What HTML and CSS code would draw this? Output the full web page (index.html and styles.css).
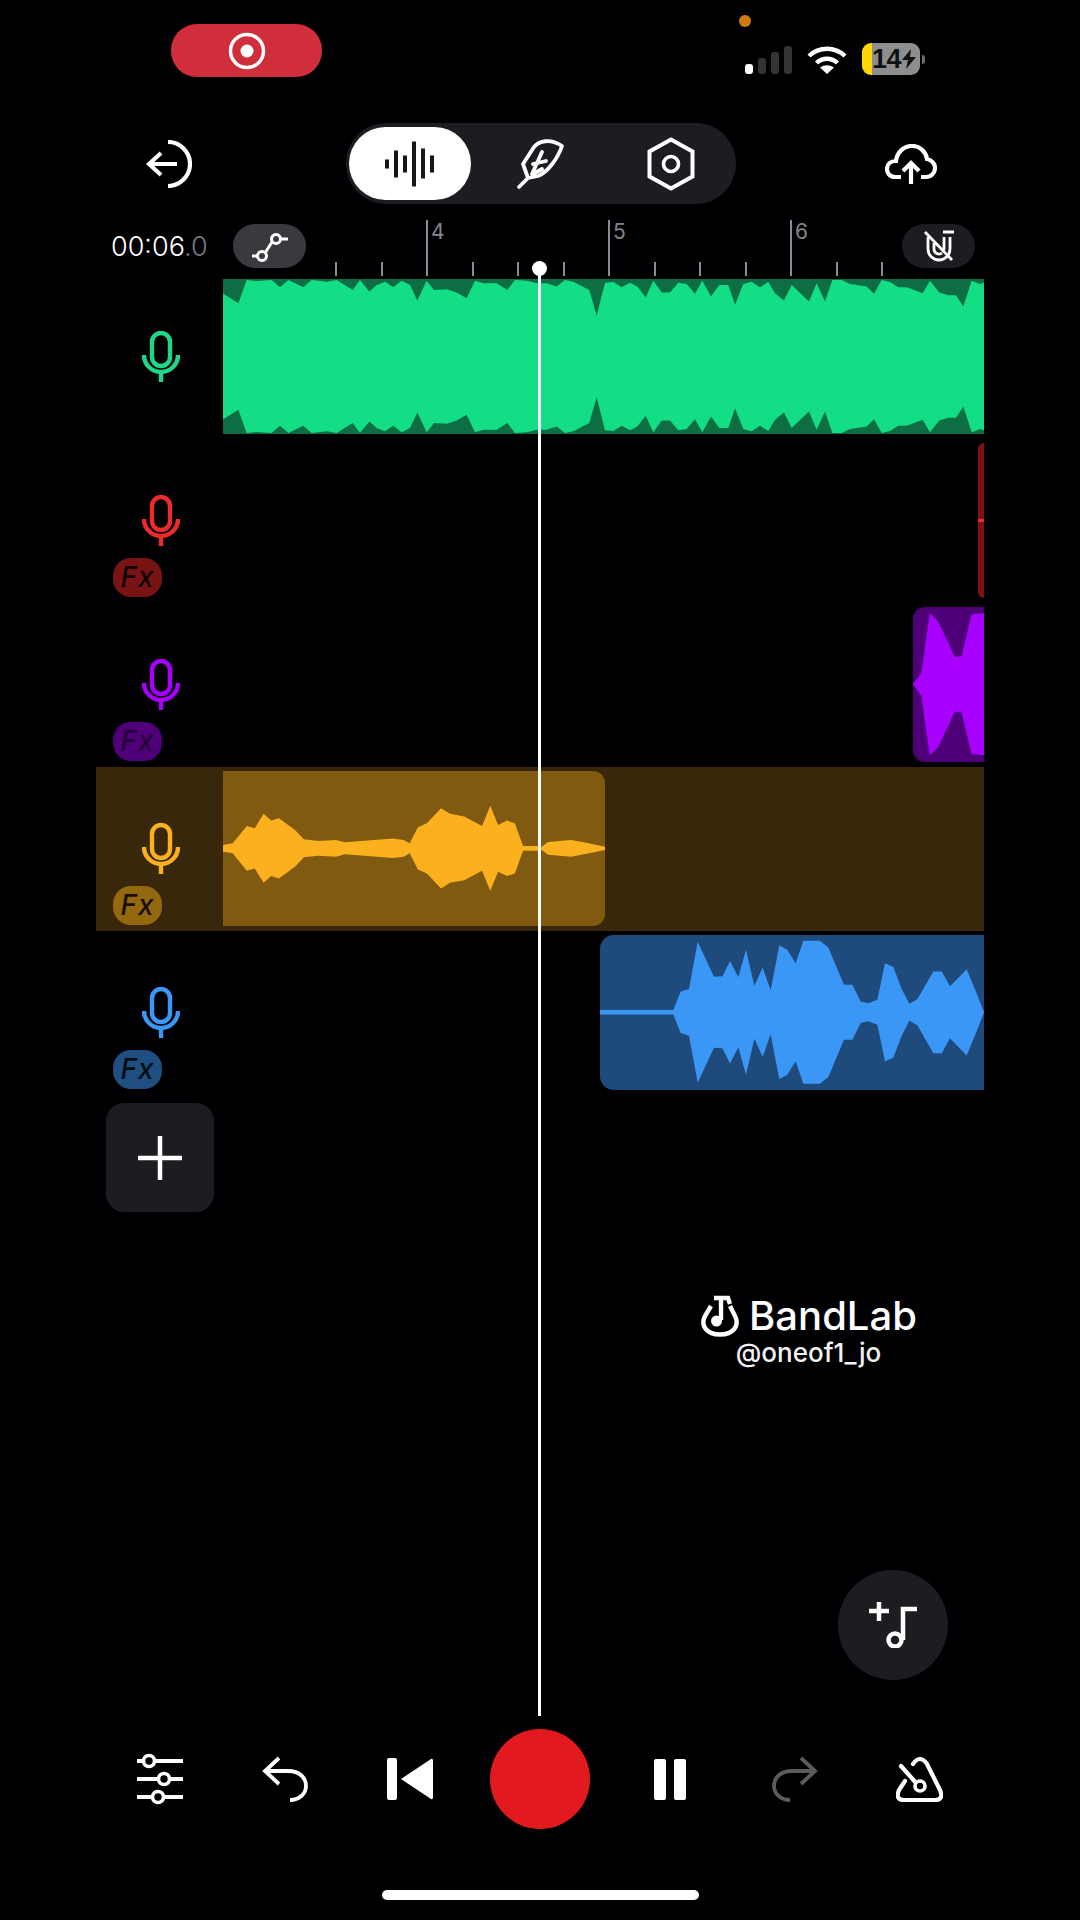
FILE: index.html
```html
<!DOCTYPE html>
<html lang="en">
<head>
<meta charset="UTF-8">
<title>BandLab Studio</title>
<meta name="viewport" content="width=device-width, initial-scale=1">
<link rel="stylesheet" href="styles.css">
</head>

<body>
<div class="screen">
  <div class="status-bar">
    <div class="rec-pill">
      <svg width="38" height="38" viewBox="0 0 38 38"><circle cx="19" cy="19" r="16.5" fill="none" stroke="#fff" stroke-width="3.5"/><circle cx="19" cy="19" r="6.5" fill="#fff"/></svg>
    </div>
    <div class="status-icons">
      <div class="signal">
        <span class="bar on b1"></span><span class="bar b2"></span><span class="bar b3"></span><span class="bar b4"></span>
      </div>
      <svg class="wifi" width="40" height="28" viewBox="0 0 40 28"><path d="M2 10A26 26 0 0 1 38 10M9.5 17A15 15 0 0 1 30.5 17" fill="none" stroke="#fff" stroke-width="4.5"/><path d="M20 28L13 21.5Q20 17 27 21.5Z" fill="#fff"/></svg>
      <div class="battery">
        <span class="battery-pct">14</span>
        <svg width="14" height="20" viewBox="0 0 14 20"><path d="M9 0L0 11H6L4 20L14 8H8Z" fill="#111"/></svg>
      </div>
      <span class="battery-nub"></span>
    </div>
    <span class="mic-dot"></span>
  </div>

  <div class="toolbar">
    <svg class="back-icon" width="46" height="48" viewBox="0 0 46 48"><path d="M15 13L3 24L15 35M3 24H31M22 2A22 22 0 0 1 22 46" fill="none" stroke="#fff" stroke-width="4.2"/></svg>
    <div class="segments">
      <div class="seg seg-active">
        <svg width="50" height="48" viewBox="0 0 50 48"><path d="M2 19.5V28.5M11 10.5V37.5M20 15.5V32.5M29 1.5V46.5M38 8.5V38.5M47 15.5V32.5" stroke="#17171a" stroke-width="4"/></svg>
      </div>
      <div class="seg seg-feather">
        <svg width="60" height="60" viewBox="20 12 60 60"><path d="M72 24C60 16 49 19 44 25L33 42L38 56L48 54C58 50 68 36 72 24ZM38 56L29 65M52 30L42 52M43 42L56 39M43 52L52 47" fill="none" stroke="#fff" stroke-width="3.8" stroke-linecap="round" stroke-linejoin="round"/></svg>
      </div>
      <div class="seg seg-settings">
        <svg width="48" height="54" viewBox="0 0 48 54"><path d="M24 2.5L45.5 14.5V39.5L24 51.5L2.5 39.5V14.5Z" fill="none" stroke="#fff" stroke-width="4"/><circle cx="24" cy="27" r="7.5" fill="none" stroke="#fff" stroke-width="3.6"/></svg>
      </div>
    </div>
    <svg class="cloud-icon" width="52" height="40" viewBox="0 0 52 40"><path d="M16 33H10C4 33 2 28 2 25C2 20 6 17 11 17C12 8 19 2 27 2C35 2 41 8 42 15C47 16 50 20 50 24C50 29 46 33 41 33H36M26 40V19M18 27L26 19L34 27" fill="none" stroke="#fff" stroke-width="4.2"/></svg>
  </div>

  <div class="ruler">
    <div class="time">00:06<span class="time-dim">.0</span></div>
    <div class="ruler-pill pill-grey">
      <svg width="38" height="32" viewBox="0 0 38 32"><path d="M30 9H37M1 26H7M21 12L14 23" fill="none" stroke="#fff" stroke-width="3"/><circle cx="25" cy="9" r="4.5" fill="none" stroke="#fff" stroke-width="3"/><circle cx="11" cy="26" r="4.5" fill="none" stroke="#fff" stroke-width="3"/></svg>
    </div>
    <div class="ticks">
      <span class="tick"></span>
      <span class="tick"></span>
      <span class="tick major"><b>4</b></span>
      <span class="tick"></span>
      <span class="tick"></span>
      <span class="tick"></span>
      <span class="tick major"><b>5</b></span>
      <span class="tick"></span>
      <span class="tick"></span>
      <span class="tick"></span>
      <span class="tick major"><b>6</b></span>
      <span class="tick"></span>
      <span class="tick"></span>
    </div>
    <div class="ruler-pill pill-dark">
      <svg width="32" height="32" viewBox="0 0 32 32"><path d="M5 7V19A11 11 0 0 0 27 19V7M20 2H31M21 7V20M11 13V19A5 5 0 0 0 19 23M2 2L29 30" fill="none" stroke="#fff" stroke-width="2.8"/></svg>
    </div>
  </div>

  <div class="tracks">
    <div class="track green">
      <div class="track-head">
        <svg class="mic" width="38" height="51" viewBox="0 0 38 51"><use href="#mic-shape"/></svg>
      </div>
      <div class="lane">
        <div class="clip clip-green">
          <svg class="wave" viewBox="9 27 2283 469" preserveAspectRatio="none">
            <g id="wave-green"><polygon points="10,72 55,100 80,30 110,33 155,30 180,52 205,30 250,52 275,30 320,35 350,30 398,60 420,30 448,65 470,45 495,35 520,52 545,32 570,45 592,92 620,32 642,60 680,58 710,68 740,85 765,32 790,40 830,40 862,60 885,30 920,32 950,40 980,40 1010,50 1035,30 1060,35 1108,60 1130,138 1155,38 1180,36 1205,52 1230,38 1252,50 1277,82 1300,32 1325,68 1350,68 1375,38 1400,42 1425,72 1447,32 1473,80 1498,45 1525,45 1545,105 1570,42 1595,35 1620,52 1645,36 1665,70 1692,92 1715,45 1767,95 1790,40 1815,95 1837,30 1865,30 1890,42 1940,50 1962,72 1985,30 2010,36 2035,52 2060,52 2108,70 2130,32 2158,68 2185,76 2208,76 2230,110 2255,32 2280,42 2292,38 2292,266 9,266 9,72"/></g>
            <use href="#wave-green" transform="matrix(1 0 0 -1 0 523)"/>
          </svg>
        </div>
      </div>
    </div>

    <div class="track red">
      <div class="track-head">
        <svg class="mic" width="38" height="51" viewBox="0 0 38 51"><use href="#mic-shape"/></svg>
        <div class="fx">Fx</div>
      </div>
      <div class="lane">
        <div class="clip clip-red"><span class="clip-red-line"></span></div>
      </div>
    </div>

    <div class="track purple">
      <div class="track-head">
        <svg class="mic" width="38" height="51" viewBox="0 0 38 51"><use href="#mic-shape"/></svg>
        <div class="fx">Fx</div>
      </div>
      <div class="lane">
        <div class="clip clip-purple">
          <svg class="wave" viewBox="970 398 212 347" preserveAspectRatio="none">
            <g id="wave-purple"><polygon points="970,571 995,545 1020,412 1045,430 1095,510 1115,508 1145,415 1182,412 1182,574 970,574"/></g>
            <use href="#wave-purple" transform="matrix(1 0 0 -1 0 1142)"/>
          </svg>
        </div>
      </div>
    </div>

    <div class="track orange selected">
      <div class="track-head">
        <svg class="mic" width="38" height="51" viewBox="0 0 38 51"><use href="#mic-shape"/></svg>
        <div class="fx">Fx</div>
      </div>
      <div class="lane">
        <div class="clip clip-orange">
          <svg class="wave" viewBox="373 34 1072 463" preserveAspectRatio="none">
            <g id="wave-orange"><polygon points="373,255 400,250 440,198 462,205 487,162 508,182 530,175 575,210 600,238 640,243 690,240 715,247 850,236 880,240 897,250 920,202 945,190 985,145 1010,162 1050,170 1100,198 1123,138 1145,195 1170,182 1192,190 1215,258 1255,258 1265,262 1285,246 1350,240 1400,250 1445,260 1445,268 373,268"/></g>
            <use href="#wave-orange" transform="matrix(1 0 0 -1 0 530)"/>
          </svg>
        </div>
      </div>
    </div>

    <div class="track blue">
      <div class="track-head">
        <svg class="mic" width="38" height="51" viewBox="0 0 38 51"><use href="#mic-shape"/></svg>
        <div class="fx">Fx</div>
      </div>
      <div class="lane">
        <div class="clip clip-blue">
          <svg class="wave" viewBox="30 1132 1152 345" preserveAspectRatio="none">
            <g id="wave-blue"><polygon points="30,1299 250,1299 272,1258 297,1252 323,1147 372,1225 397,1224 420,1190 445,1226 468,1165 493,1245 518,1205 542,1255 568,1155 592,1165 617,1195 640,1145 690,1145 715,1160 762,1243 787,1243 812,1280 835,1284 862,1276 885,1195 910,1203 935,1252 958,1285 982,1275 1030,1213 1055,1213 1080,1246 1130,1208 1160,1262 1182,1304 1182,1306 30,1306"/></g>
            <use href="#wave-blue" transform="matrix(1 0 0 -1 0 2608)"/>
          </svg>
        </div>
      </div>
    </div>
  </div>

  <div class="add-track">
    <svg width="44" height="44" viewBox="0 0 44 44"><path d="M22 0V44M0 22H44" stroke="#fff" stroke-width="4.5"/></svg>
  </div>

  <div class="controls">
    <div class="ctrl">
      <svg width="46" height="52" viewBox="0 0 46 52"><path d="M0 8H6M18 8H46M0 26H21M33 26H46M0 44H15M27 44H46" stroke="#fff" stroke-width="4"/><circle cx="12" cy="8" r="5.5" fill="none" stroke="#fff" stroke-width="3.6"/><circle cx="27" cy="26" r="5.5" fill="none" stroke="#fff" stroke-width="3.6"/><circle cx="21" cy="44" r="5.5" fill="none" stroke="#fff" stroke-width="3.6"/></svg>
    </div>
    <div class="ctrl">
      <svg width="46" height="46" viewBox="0 0 46 46"><path d="M17 2L3 15L17 28M3 15H26C38 15 44 22 44 30C44 38 37 44 28 44" fill="none" stroke="#fff" stroke-width="3.8"/></svg>
    </div>
    <div class="ctrl">
      <svg width="46" height="42" viewBox="0 0 46 42"><rect width="10" height="42" rx="2" fill="#fff"/><path d="M14 21L44 1Q46 0 46 3V39Q46 42 44 41Z" fill="#fff"/></svg>
    </div>
    <div class="ctrl ctrl-rec"><div class="rec-btn"></div></div>
    <div class="ctrl">
      <div class="pause"><span></span><span></span></div>
    </div>
    <div class="ctrl">
      <svg width="46" height="46" viewBox="0 0 46 46"><path d="M29 2L43 15L29 28M43 15H20C8 15 2 22 2 30C2 38 9 44 18 44" fill="none" stroke="#5c5c5e" stroke-width="3.8"/></svg>
    </div>
    <div class="ctrl">
      <svg width="47" height="46" viewBox="0 0 47 46"><path d="M17 8Q24 -2 31 8L44 34Q48 44 39 44H8Q-1 44 3 34L9 25M5 10L21 28" fill="none" stroke="#fff" stroke-width="4.2" stroke-linecap="round"/><circle cx="24" cy="30" r="5" fill="#000" stroke="#fff" stroke-width="3.6"/></svg>
    </div>
  </div>

  <div class="home-bar"></div>

  <!-- floating stuff on top of the timeline -->
  <div class="playhead"></div>

  <div class="watermark">
    <div class="wm-brand">
      <svg width="40" height="42" viewBox="0 0 40 42"><path d="M11 11L5 21C0 31 7 39.5 20 39.5C33 39.5 40 31 35 21L30 11M21 3V25M14 3H28L30 9" fill="none" stroke="#fff" stroke-width="4.4"/><circle cx="16.5" cy="26" r="5.5" fill="#fff"/></svg>
      <span class="wm-name">BandLab</span>
    </div>
    <div class="wm-user">@oneof1_jo</div>
  </div>

  <div class="fab">
    <svg width="48" height="46" viewBox="0 0 48 46"><path d="M0 9H20M10 0V19M48 7H34V38" fill="none" stroke="#fff" stroke-width="4.5"/><circle cx="26" cy="38" r="6.5" fill="none" stroke="#fff" stroke-width="4.5"/></svg>
  </div>
</div>

<svg class="defs" width="0" height="0">
  <defs>
    <g id="mic-shape" fill="none" stroke="currentColor" stroke-width="4.4">
      <rect x="10" y="2" width="18" height="33" rx="9"/>
      <path d="M2 24A17 17 0 0 0 36 24M19 41V51"/>
    </g>
  </defs>
</svg>
</body>
</html>
```

FILE: styles.css
```css
body {
  margin: 0;
  background: #000;
  font-family: Inter, "Liberation Sans", sans-serif;
  color: #fff;
}

.screen {
  position: relative;
  width: 1080px;
  height: 1920px;
  overflow: hidden;
  display: flex;
  flex-direction: column;
  background: #000002;
}

.defs {
  position: absolute;
}

/* status bar */
.status-bar {
  height: 123px;
  display: flex;
  align-items: flex-start;
  flex-shrink: 0;
}
.rec-pill {
  margin: 24px 0 0 171px;
  width: 151px;
  height: 53px;
  border-radius: 26px;
  background: #cf2e3a;
  display: flex;
  align-items: center;
  justify-content: center;
}
.status-icons {
  margin: 43px 0 0 423px;
  display: flex;
  align-items: center;
  height: 32px;
}
.signal {
  display: flex;
  align-items: flex-end;
  gap: 5px;
  height: 28px;
  margin-top: 2px;
}
.bar {
  width: 8px;
  border-radius: 3px;
  background: #333335;
}
.bar.on { background: #fff; }
.b1 { height: 10px; }
.b2 { height: 16px; }
.b3 { height: 22px; }
.b4 { height: 28px; }
.wifi {
  margin: 2px 0 0 15px;
}
.battery {
  margin-left: 15px;
  width: 58px;
  height: 32px;
  border-radius: 9px;
  background: linear-gradient(90deg, #ffd60a 10px, #8e8e90 10px);
  display: flex;
  align-items: center;
  padding-left: 10px;
  box-sizing: border-box;
  color: #111;
}
.battery-pct {
  font-family: "Liberation Sans", sans-serif;
  font-size: 27px;
  font-weight: bold;
  letter-spacing: -0.5px;
  margin-right: 1px;
}
.battery-nub {
  width: 3px;
  height: 9px;
  margin-left: 2px;
  border-radius: 0 3px 3px 0;
  background: #6e6e70;
}
.mic-dot {
  position: absolute;
  left: 739px;
  top: 15px;
  width: 12px;
  height: 12px;
  border-radius: 50%;
  background: #d07a10;
}

/* top toolbar */
.toolbar {
  height: 81px;
  display: flex;
  align-items: center;
  flex-shrink: 0;
  padding-left: 146px;
}
.segments {
  margin-left: 154px;
  width: 390px;
  height: 81px;
  box-sizing: border-box;
  padding: 4px 3px;
  border-radius: 40px;
  background: #1c1d21;
  display: flex;
}
.seg {
  display: flex;
  align-items: center;
  justify-content: center;
}
.seg-active {
  width: 122px;
  border-radius: 37px;
  background: #fff;
}
.seg-feather { width: 138px; }
.seg-settings { width: 124px; }
.cloud-icon {
  margin-left: 149px;
}

/* ruler */
.ruler {
  margin-top: 13px;
  height: 58px;
  display: flex;
  align-items: center;
  padding-left: 111px;
  flex-shrink: 0;
}
.time {
  width: 122px;
  flex-shrink: 0;
  font-size: 27px;
  font-weight: 300;
  white-space: nowrap;
}
.time-dim {
  color: #77787c;
}
.ruler-pill {
  width: 73px;
  height: 44px;
  border-radius: 22px;
  display: flex;
  align-items: center;
  justify-content: center;
  flex-shrink: 0;
}
.pill-grey { background: #3a3a3e; }
.pill-dark { background: #1c1d21; }
.ticks {
  margin-left: 29px;
  width: 567px;
  height: 56px;
  align-self: flex-start;
  margin-top: 3px;
  display: flex;
  align-items: flex-end;
  flex-shrink: 0;
}
.tick {
  position: relative;
  width: 45.5px;
  height: 14px;
  box-sizing: border-box;
  border-left: 2px solid #8c8c90;
  flex-shrink: 0;
}
.tick.major {
  height: 56px;
}
.tick b {
  position: absolute;
  left: 3px;
  top: 0;
  font-size: 21px;
  line-height: 24px;
  font-weight: 400;
  color: #85868c;
}

/* tracks */
.tracks {
  margin-left: 96px;
  width: 888px;
  flex-shrink: 0;
}
.track {
  display: flex;
  height: 164px;
}
.track.selected {
  background: #38270b;
}
.track-head {
  width: 127px;
  flex-shrink: 0;
  padding: 56px 0 0 17px;
  box-sizing: border-box;
}
.mic {
  display: block;
  margin-left: 29px;
}
.fx {
  margin-top: 12px;
  width: 49px;
  height: 39px;
  border-radius: 18px;
  font-style: italic;
  font-weight: 500;
  font-size: 28px;
  line-height: 39px;
  letter-spacing: 1px;
  text-align: center;
  color: rgba(0, 0, 0, 0.85);
}
.lane {
  position: relative;
  flex: 1;
  overflow: hidden;
}
.clip {
  position: absolute;
  top: 4px;
  height: 155px;
  overflow: hidden;
}
.wave {
  display: block;
  width: 100%;
  height: 100%;
}

.green .mic { color: #20d68a; }
.red .mic { color: #ee2b2b; }
.purple .mic { color: #a800ff; }
.orange .mic { color: #fbb01e; }
.blue .mic { color: #3b97f5; }

.red .fx { background: #7a1414; }
.purple .fx { background: #4f0079; color: rgba(0, 0, 0, 0.55); }
.orange .fx { background: #94680f; }
.blue .fx { background: #1f4f80; }

.clip-green {
  left: 0;
  right: 0;
  background: #0d6e44;
}
.clip-green .wave { fill: #14de85; }
.clip-red {
  left: 755px;
  right: 0;
  border-radius: 10px 0 0 10px;
  background: #7c1212;
}
.clip-red-line {
  position: absolute;
  left: 0;
  right: 0;
  top: 76px;
  height: 3px;
  background: #ee2b2b;
}
.clip-purple {
  left: 690px;
  right: 0;
  border-radius: 12px 0 0 12px;
  background: #4f0079;
}
.clip-purple .wave { fill: #a800ff; }
.clip-orange {
  left: 0;
  width: 382px;
  border-radius: 0 12px 12px 0;
  background: #7f5a10;
}
.clip-orange .wave { fill: #fbb01e; }
.clip-blue {
  left: 377px;
  right: 0;
  border-radius: 14px 0 0 14px;
  background: #1e4b7c;
}
.clip-blue .wave { fill: #3b97f5; }

.add-track {
  margin: 8px 0 0 106px;
  width: 108px;
  height: 109px;
  border-radius: 18px;
  background: #1c1d21;
  display: flex;
  align-items: center;
  justify-content: center;
  flex-shrink: 0;
}

/* bottom controls */
.controls {
  margin-top: auto;
  padding-left: 97px;
  height: 100px;
  display: flex;
  align-items: center;
  flex-shrink: 0;
}
.ctrl {
  width: 125px;
  display: flex;
  justify-content: center;
  flex-shrink: 0;
}
.ctrl-rec {
  width: 135px;
}
.rec-btn {
  width: 100px;
  height: 100px;
  border-radius: 50%;
  background: #e21a1f;
}
.pause {
  display: flex;
  gap: 8px;
}
.pause span {
  width: 12px;
  height: 41px;
  border-radius: 2px;
  background: #fff;
}
.home-bar {
  margin: 61px 0 20px 382px;
  width: 317px;
  height: 10px;
  border-radius: 5px;
  background: #fff;
  flex-shrink: 0;
}

/* overlays */
.playhead {
  position: absolute;
  left: 538px;
  top: 268px;
  width: 3px;
  height: 1448px;
  background: #fff;
}
.playhead::before {
  content: "";
  position: absolute;
  left: -6px;
  top: -7px;
  width: 15px;
  height: 15px;
  border-radius: 50%;
  background: #fff;
}
.watermark {
  position: absolute;
  left: 700px;
  top: 1295px;
  width: 217px;
  display: flex;
  flex-direction: column;
  align-items: center;
}
.wm-brand {
  display: flex;
  align-items: center;
  gap: 9px;
}
.wm-name {
  font-size: 40px;
  line-height: 42px;
  font-weight: 500;
}
.wm-user {
  font-size: 26px;
  line-height: 32px;
  font-weight: 500;
  color: #f2f2f2;
}
.fab {
  position: absolute;
  left: 838px;
  top: 1570px;
  width: 110px;
  height: 110px;
  border-radius: 50%;
  background: #1c1d21;
  display: flex;
  align-items: center;
  justify-content: center;
}
```
